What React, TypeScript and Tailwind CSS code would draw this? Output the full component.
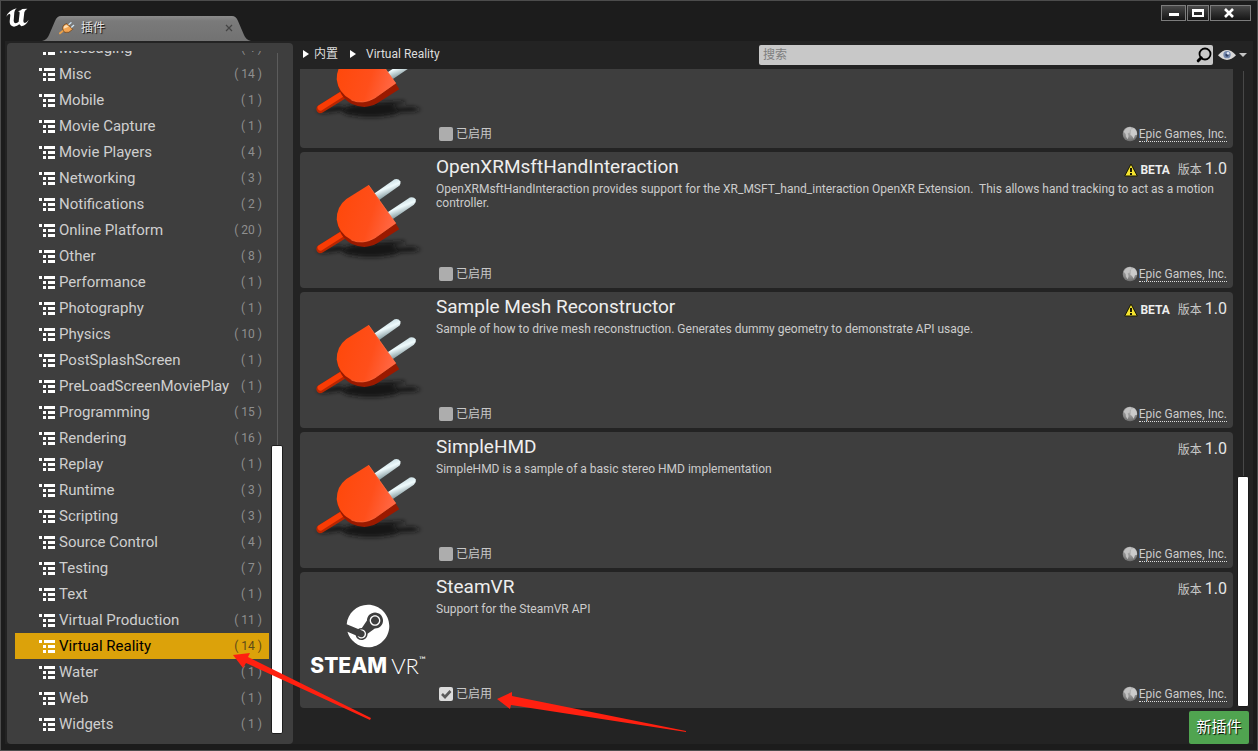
import { useId } from "react";
import { FaSteam } from "react-icons/fa";

const categories: [string, number][] = [
  ["Messaging", 4], ["Misc", 14], ["Mobile", 1], ["Movie Capture", 1], ["Movie Players", 4],
  ["Networking", 3], ["Notifications", 2], ["Online Platform", 20], ["Other", 8],
  ["Performance", 1], ["Photography", 1], ["Physics", 10], ["PostSplashScreen", 1],
  ["PreLoadScreenMoviePlay", 1], ["Programming", 15], ["Rendering", 16], ["Replay", 1],
  ["Runtime", 3], ["Scripting", 3], ["Source Control", 4], ["Testing", 7], ["Text", 1],
  ["Virtual Production", 11], ["Virtual Reality", 14], ["Water", 1], ["Web", 1], ["Widgets", 1],
];

type Plugin = { name: string; text: string; beta?: boolean; steam?: boolean; enabled?: boolean };

const plugins: Plugin[] = [
  { name: "", text: "" },
  {
    name: "OpenXRMsftHandInteraction",
    text: "OpenXRMsftHandInteraction provides support for the XR_MSFT_hand_interaction OpenXR Extension.  This allows hand tracking to act as a motion controller.",
    beta: true,
  },
  {
    name: "Sample Mesh Reconstructor",
    text: "Sample of how to drive mesh reconstruction. Generates dummy geometry to demonstrate API usage.",
    beta: true,
  },
  { name: "SimpleHMD", text: "SimpleHMD is a sample of a basic stereo HMD implementation" },
  { name: "SteamVR", text: "Support for the SteamVR API", steam: true, enabled: true },
];

function PlugPicture() {
  const id = useId();
  return (
    <svg viewBox="2 6 390 400" className="h-[133px] w-[130px]" aria-hidden="true">
      <defs>
        <linearGradient id={id + "f"} x1="0" y1="0.3" x2="1" y2="0.6">
          <stop offset="0" stopColor="#ff480a" />
          <stop offset="0.6" stopColor="#ff4f1b" />
          <stop offset="1" stopColor="#ff6846" />
        </linearGradient>
        <linearGradient id={id + "p"} x1="0.35" y1="0.2" x2="0.65" y2="0.8">
          <stop offset="0" stopColor="#c9dde2" />
          <stop offset="0.4" stopColor="#effbfd" />
          <stop offset="1" stopColor="#7e9499" />
        </linearGradient>
        <filter id={id + "b"} x="-30%" y="-60%" width="160%" height="220%">
          <feGaussianBlur stdDeviation="6" />
        </filter>
      </defs>
      <g filter={`url(#${id}b)`} fill="#161616">
        <ellipse cx="215" cy="302" rx="88" ry="20" />
        <path d="M220 280 L315 274 L318 280 L240 296Z" />
        <path d="M240 298 L340 291 L366 299 L345 305 L250 310Z" />
        <path d="M50 302 L120 288 L150 300 L70 310Z" />
      </g>
      <path d="M63 298 L130 256" stroke="#ba2600" strokeWidth="25" strokeLinecap="round" />
      <path d="M63 294 L128 253" stroke="#f93c05" strokeWidth="17" strokeLinecap="round" />
      <path d="M225 131 L286 88 Q297 84 303 94 Q306 103 298 109 L240 150Z" fill={`url(#${id}p)`} />
      <path d="M264 188 L332 143 Q343 139 350 149 Q352 158 344 165 L280 208Z" fill={`url(#${id}p)`} />
      <path d="M113 210 Q118 262 156 282 Q198 302 235 280 L300 238 L288 218 L190 260Z" fill="#9a1a00" />
      <path d="M208 105 L290 220 L226 265 Q190 286 155 270 Q117 250 112 210 Q111 170 141 147Z" fill={`url(#${id}f)`} />
      <path d="M208 106 L289 220 L226 265 Q190 285 156 271" fill="none" stroke="#ff7044" strokeWidth="2" />
    </svg>
  );
}

function SteamPicture() {
  return (
    <div className="flex flex-col items-center pt-8 text-white">
      <FaSteam className="size-11" aria-hidden="true" />
      <div className="flex items-start gap-1 pt-1 text-[22px] leading-7">
        <span className="font-['Inter',sans-serif] text-[21px] font-extrabold">STEAM</span>
        <span className="flex font-['Lato',sans-serif] font-light">
          VR<span className="text-[9px] leading-4 font-normal">™</span>
        </span>
      </div>
    </div>
  );
}

function TreeIcon() {
  return (
    <svg viewBox="0 0 16 13" className="h-[13px] w-4 shrink-0" fill="#fff" shapeRendering="crispEdges" aria-hidden="true">
      <path d="M0 0h3v3H0zM5 0h11v3H5zM4 5h3v3H4zM9 5h7v3H9zM4 10h3v3H4zM9 10h7v3H9z" />
    </svg>
  );
}

function Globe() {
  const id = useId();
  return (
    <svg viewBox="0 0 48 48" className="size-4" aria-hidden="true">
      <defs>
        <radialGradient id={id} cx="0.45" cy="0.25" r="0.8">
          <stop offset="0" stopColor="#b8b8b8" />
          <stop offset="0.6" stopColor="#8c8c8c" />
          <stop offset="1" stopColor="#666666" />
        </radialGradient>
      </defs>
      <circle cx="24" cy="24" r="22" fill={`url(#${id})`} />
      <path d="M5 17 Q12 4 25 3 L29 8 L22 14 L24 19 L17 22 L20 30 L17 40 L12 32 L11 24Z" fill="#c2c2c2" />
      <path d="M28 8 L36 6 Q46 14 45 26 L39 28 L35 38 L30 30 L25 26 L26 18Z" fill="#cacaca" />
    </svg>
  );
}

function Warning() {
  return (
    <svg viewBox="0 0 14 14" className="size-3.5" aria-hidden="true">
      <path d="M7 1 L13.3 13 H0.7Z" fill="#f5e430" stroke="#1b1a00" strokeWidth="1" strokeLinejoin="round" />
      <path d="M6 5h2v4H6zM6 10h2v2H6z" fill="#1b1a00" />
    </svg>
  );
}

function Card({ plugin }: { plugin: Plugin }) {
  const id = useId();
  return (
    <article className="flex h-[136px] shrink-0 rounded bg-[#3e3e3e]">
      <div className="flex w-[136px] shrink-0 justify-center">
        {plugin.steam ? <SteamPicture /> : <div className="w-full"><PlugPicture /></div>}
      </div>
      <div className="flex min-w-0 grow flex-col pr-1.5">
        {plugin.name && (
          <div className="flex h-[30px] items-center justify-between">
            <h2 className="text-[19px] text-[#eeeeee]">{plugin.name}</h2>
            <div className="flex items-center gap-2 pt-1">
              {plugin.beta && (
                <span className="flex items-center gap-0.5 pt-0.5 text-xs font-bold text-[#eeeeee]">
                  <Warning />
                  BETA
                </span>
              )}
              <span className="flex items-baseline gap-[3px] text-xs text-[#c8c8c8]">
                版本 <span className="text-base text-[#e6e6e6]">1.0</span>
              </span>
            </div>
          </div>
        )}
        <p className="text-xs leading-[14px] whitespace-pre-wrap text-[#cccccc]">{plugin.text}</p>
        <div className="mt-auto flex items-center justify-between pb-1.5">
          <div className="flex items-center gap-[3px] pl-[3px]">
            <span className="relative flex size-3.5">
              <input
                id={id}
                type="checkbox"
                defaultChecked={plugin.enabled}
                className="peer size-3.5 appearance-none rounded-xs bg-[#adadad] checked:bg-[#dcdcdc]"
              />
              <svg viewBox="0 0 14 14" className="pointer-events-none absolute inset-0 hidden size-3.5 peer-checked:block" aria-hidden="true">
                <path d="M3 7 L6 10 L11.5 4" fill="none" stroke="#5a5a5a" strokeWidth="2.6" />
              </svg>
            </span>
            <label htmlFor={id} className="text-xs text-[#c8c8c8]">已启用</label>
          </div>
          <a href="#author" className="flex items-center gap-px text-xs text-[#cccccc]">
            <Globe />
            <span className="border-b border-dotted border-[#dddddd] leading-[14px]">Epic Games, Inc.</span>
          </a>
        </div>
      </div>
    </article>
  );
}

function TitleBar() {
  const button =
    "flex h-4 items-center justify-center border border-[#7c7c7c] bg-linear-to-b from-[#4a4a4a] to-[#161616]";
  return (
    <header className="flex h-10 shrink-0 items-start">
      <svg viewBox="0 0 69 57" className="mt-[7px] ml-[5px] h-[19px] w-[23px]" fill="#fff" aria-label="Unreal Engine">
        <path d="M1 26 Q8 6 32 1 Q26 6 25 13 L23 39 Q24 46 29 46 Q34 45 38 41 L41 14 Q41 10 35 10 Q44 8 49 3 L64 2 Q56 7 55 13 L52 39 Q52 45 57 45 Q63 43 68 35 Q63 50 46 55 L40 49 Q34 55 24 56 Q10 55 11 40 L13 22 Q13 17 9 18 Q5 20 1 26Z" />
      </svg>
      <div className="relative mt-[15px] ml-[13px] h-[25px] w-[209px]">
        <svg viewBox="0 0 209 25" className="absolute inset-0 h-[25px] w-[209px]" aria-hidden="true">
          <defs>
            <linearGradient id="tab" x1="0" y1="0" x2="0" y2="1">
              <stop offset="0" stopColor="#8c8c8c" />
              <stop offset="0.2" stopColor="#7a7a7a" />
              <stop offset="1" stopColor="#727272" />
            </linearGradient>
          </defs>
          <path d="M0 25 Q5 24 7 19 L13 5 Q15 0 19 0 H190 Q194 0 196 5 L202 19 Q204 24 209 25Z" fill="url(#tab)" />
        </svg>
        <div className="relative flex h-6 items-center pr-4 pl-[17px]">
          <svg viewBox="0 0 48 42" className="h-3.5 w-4" aria-hidden="true">
            <path d="M28 12 L36 5 M36 20 L44 13" stroke="#cfe6f5" strokeWidth="4" strokeLinecap="round" />
            <path d="M3 37 L14 28" stroke="#e9a04c" strokeWidth="6" strokeLinecap="round" />
            <path d="M24 8 L41 25 Q30 38 17 34 Q6 22 15 12 Q19 9 24 8Z" fill="#f4a552" stroke="#5d3510" strokeWidth="2" />
            <path d="M22 12 Q13 14 14 23 L29 17Z" fill="#ffe0b4" />
          </svg>
          <h1 className="ml-1.5 text-xs text-[#e4e4e4] [text-shadow:1px_1px_1px_#000]">插件</h1>
          <button type="button" aria-label="关闭标签" className="ml-auto flex size-3 items-center justify-center">
            <svg viewBox="0 0 8 8" className="size-2" aria-hidden="true">
              <path d="M1 1 L7 7 M7 1 L1 7" stroke="#444444" strokeWidth="1.2" />
            </svg>
          </button>
        </div>
      </div>
      <div className="mt-1 mr-1.5 ml-auto flex gap-px">
        <button type="button" aria-label="最小化" className={button + " w-[25px]"}>
          <svg viewBox="0 0 12 10" className="h-2.5 w-3" aria-hidden="true"><path d="M1 5h10v3H1z" fill="#fff" /></svg>
        </button>
        <button type="button" aria-label="最大化" className={button + " w-[22px]"}>
          <svg viewBox="0 0 12 10" className="h-2.5 w-3" aria-hidden="true"><path d="M0 1h12v8H0zM2 4v3h8V4z" fillRule="evenodd" fill="#fff" /></svg>
        </button>
        <button type="button" aria-label="关闭" className={button + " w-[41px] pr-1"}>
          <svg viewBox="0 0 12 10" className="h-2.5 w-3" aria-hidden="true"><path d="M2 1 L10 9 M10 1 L2 9" stroke="#fff" strokeWidth="2.6" /></svg>
        </button>
      </div>
    </header>
  );
}

function Crumb() {
  return (
    <svg viewBox="0 0 6 8" className="h-2 w-1.5" aria-hidden="true"><path d="M0 0 L6 4 L0 8Z" fill="#fff" /></svg>
  );
}

export default function App() {
  return (
    <div className="relative flex h-screen flex-col overflow-hidden border border-[#4c4c4c] bg-[#1c1c1c] px-1 pb-1.5 font-['Roboto','Noto_Sans_CJK_SC',sans-serif]">
      <div className="-mx-1 flex flex-col"><TitleBar /></div>
      <div className="flex min-h-0 grow gap-[7px] bg-[#232323] pt-0.5 pr-1 pl-0.5">
        <nav className="flex w-[286px] shrink-0 rounded-sm bg-[#3e3e3e] pt-2 pr-2.5 pb-[7px] pl-2">
          <ul className="flex min-w-0 grow flex-col justify-end overflow-hidden">
            {categories.map(([name, count]) => {
              const selected = name === "Virtual Reality";
              return (
                <li key={name} className="shrink-0">
                  <button
                    type="button"
                    aria-pressed={selected}
                    className={
                      "flex h-[26px] w-full items-center gap-1 pr-[7px] pl-6 text-left " +
                      (selected ? "bg-[#dca20a] text-black" : "text-[#cfcfcf]")
                    }
                  >
                    <TreeIcon />
                    <span className="text-[15px] whitespace-nowrap">{name}</span>
                    <span className={"ml-auto text-xs whitespace-nowrap " + (selected ? "text-[#5c4a18]" : "text-[#8f8f8f]")}>
                      ( {count} )
                    </span>
                  </button>
                </li>
              );
            })}
          </ul>
          <div className="ml-0.5 flex w-3 flex-col items-center pt-0.5 pb-[3px]">
            <div className="w-px grow bg-[#5c5c5c]" />
            <div className="h-[289px] w-3 rounded-xs border border-[#1e1e1e] bg-white" />
          </div>
        </nav>
        <main className="flex min-w-0 grow flex-col">
          <div className="flex h-[26px] shrink-0 items-center pb-0.5">
            <div className="flex grow items-center gap-3 pb-0.5 pl-[3px] text-xs text-[#dddddd]">
              <span className="flex items-center gap-[5px]">
                <Crumb />
                <a href="#builtin">内置</a>
              </span>
              <span className="flex items-center gap-2.5">
                <Crumb />
                <a href="#vr">Virtual Reality</a>
              </span>
            </div>
            <div className="flex h-5 w-[454px] items-center rounded-xs bg-[#c8c8c8] pr-px pl-1">
              <input
                type="search"
                aria-label="搜索"
                placeholder="搜索"
                className="min-w-0 grow bg-transparent text-xs text-[#222222] outline-none placeholder:text-[#7e7e7e]"
              />
              <svg viewBox="0 0 16 16" className="size-4" fill="none" stroke="#000" aria-hidden="true">
                <circle cx="9" cy="7" r="5.5" strokeWidth="1.8" />
                <path d="M5.2 10.8 L2.2 13.8" strokeWidth="3" strokeLinecap="round" />
              </svg>
            </div>
            <button type="button" aria-label="视图选项" className="ml-[5px] flex items-center gap-[3px] pr-0.5">
              <svg viewBox="0 0 54 36" className="h-3 w-[18px]" aria-hidden="true">
                <path d="M0 19 Q27 -13 54 19 Q27 47 0 19Z" fill="#d8d8d8" />
                <circle cx="27" cy="17" r="11" fill="#7488ad" />
                <circle cx="27" cy="18" r="5" fill="#2f3f63" />
                <circle cx="30" cy="13" r="4" fill="#dfe7f6" />
              </svg>
              <svg viewBox="0 0 8 4" className="h-1 w-2" aria-hidden="true"><path d="M0 0H8L4 4Z" fill="#c4c4c4" /></svg>
            </button>
          </div>
          <div className="flex min-h-0 grow">
            <section className="flex min-w-0 grow flex-col justify-end gap-1 overflow-hidden">
              {plugins.map((plugin) => (
                <Card key={plugin.name} plugin={plugin} />
              ))}
            </section>
            <div className="ml-1 flex w-3 flex-col items-center pt-0.5 pb-px">
              <div className="w-px grow bg-[#484848]" />
              <div className="h-[231px] w-3 rounded-xs border border-[#1a1a1a] bg-white" />
            </div>
          </div>
          <div className="flex shrink-0 justify-end pt-[3px]">
            <button type="button" className="h-[33px] w-[60px] rounded-xs bg-[#50a450] text-[15px] text-white [text-shadow:1px_1px_1px_#000]">
              新插件
            </button>
          </div>
        </main>
      </div>
      <svg viewBox="0 0 460 82" className="pointer-events-none absolute bottom-[15px] left-[230px] h-[82px] w-[460px]" fill="#ff2010" aria-hidden="true">
        <path d="M2 2 L19 0 L17 4 L140 65 L139 67 L15 10 L12 15Z" />
        <path d="M266 46 L281 39 L281 43 L455 78 L455 79 L280 52 L279 56Z" />
      </svg>
    </div>
  );
}
